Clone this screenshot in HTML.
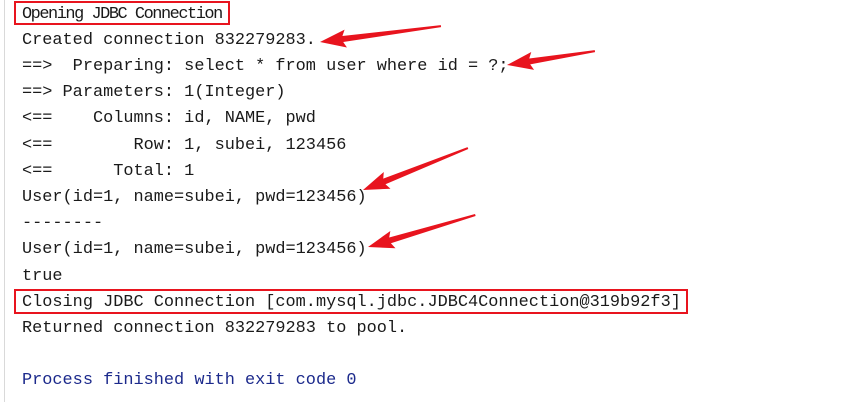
<!DOCTYPE html>
<html><head><meta charset="utf-8">
<style>
html,body{margin:0;padding:0;background:#fff;width:866px;height:402px;overflow:hidden;position:relative}
.bar{position:absolute;left:4px;top:0;width:1px;height:402px;background:#d9d9d9}
pre{position:absolute;left:22px;top:1.5px;margin:0;font-family:"Liberation Mono",monospace;font-size:16.9px;line-height:26.2px;color:#1a1a1a}
.blue{color:#1c2a8c}
.narrow{letter-spacing:-1.45px}
.box{position:absolute;border:2px solid #e8141e;box-sizing:border-box}
svg{position:absolute;left:0;top:0}
</style></head><body>
<div class="bar"></div>
<pre><span class="narrow">Opening JDBC Connection</span>
Created connection 832279283.
==>  Preparing: select * from user where id = ?;
==> Parameters: 1(Integer)
&lt;==    Columns: id, NAME, pwd
&lt;==        Row: 1, subei, 123456
&lt;==      Total: 1
User(id=1, name=subei, pwd=123456)
--------
User(id=1, name=subei, pwd=123456)
true
Closing JDBC Connection [com.mysql.jdbc.JDBC4Connection@319b92f3]
Returned connection 832279283 to pool.

<span class="blue">Process finished with exit code 0</span></pre>
<div class="box" style="left:14px;top:1px;width:216px;height:24px"></div>
<div class="box" style="left:14px;top:289px;width:674px;height:25px"></div>
<svg width="866" height="402">
<g fill="#e8141e">
<polygon transform="translate(320,42) rotate(-7.5)" points="0,0 26,-9 23,-3 122,-1 122,1 23,3 26,9"/>
<polygon transform="translate(507,65) rotate(-9)" points="0,0 26,-9 23,-3 89,-1 89,1 23,3 26,9"/>
<polygon transform="translate(363,190) rotate(-21.8)" points="0,0 26,-9 23,-3 113,-1 113,1 23,3 26,9"/>
<polygon transform="translate(368,247) rotate(-16.6)" points="0,0 26,-9 23,-3 112,-1 112,1 23,3 26,9"/>
</g>
</svg>
</body></html>
